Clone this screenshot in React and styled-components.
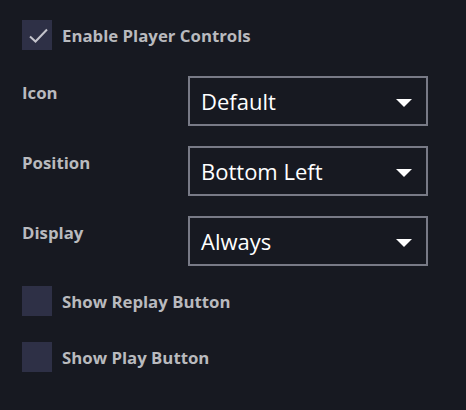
import React, { useState } from 'react'
import styled, { createGlobalStyle } from 'styled-components'

const GlobalStyle = createGlobalStyle`
  html, body {
    margin: 0;
    padding: 0;
    background-color: #171921;
  }
  body {
    font-family: "Open Sans", "Noto Sans", sans-serif;
  }
`

const Panel = styled.div`
  width: 466px;
  height: 410px;
  box-sizing: border-box;
  padding: 20px 38px 0 22px;
  display: flex;
  flex-direction: column;
  background-color: #171921;
`

const CheckRow = styled.label`
  display: flex;
  align-items: center;
  gap: 10px;
  height: 30px;
  margin-top: ${p => p.$top || 0}px;
  cursor: pointer;
`

const Box = styled.span`
  width: 30px;
  height: 30px;
  background-color: #2e3046;
  display: flex;
  align-items: center;
  justify-content: center;
  flex-shrink: 0;
`

const CheckText = styled.span`
  font-size: 16.8px;
  font-weight: 700;
  color: #b9babe;
`

const FieldRow = styled.div`
  display: flex;
  align-items: flex-start;
  margin-top: ${p => p.$top || 0}px;
`

const FieldLabel = styled.span`
  width: 166px;
  padding-top: 5px;
  font-size: 16.8px;
  font-weight: 700;
  color: #b9babe;
`

const Select = styled.div`
  width: 240px;
  height: 50px;
  box-sizing: border-box;
  border: 2px solid #787a86;
  display: flex;
  align-items: center;
  justify-content: space-between;
  padding: 0 14px 0 11px;
  color: #ffffff;
  font-size: 22px;
`

const Caret = styled.span`
  width: 0;
  height: 0;
  border-left: 8px solid transparent;
  border-right: 8px solid transparent;
  border-top: 8px solid #ffffff;
  margin-top: 3px;
`

const Check = () => (
  <svg width="30" height="30" viewBox="0 0 30 30">
    <polyline points="8,16.5 13.5,21.5 25,9.5" fill="none" stroke="#c4c4cc" strokeWidth="2" />
  </svg>
)

const Checkbox = ({ label, checked, top }) => (
  <CheckRow $top={top}>
    <Box>{checked && <Check />}</Box>
    <CheckText>{label}</CheckText>
  </CheckRow>
)

const Field = ({ label, value, top }) => (
  <FieldRow $top={top}>
    <FieldLabel>{label}</FieldLabel>
    <Select>
      <span>{value}</span>
      <Caret />
    </Select>
  </FieldRow>
)

export default function App() {
  const [fields] = useState([
    { label: 'Icon', value: 'Default', top: 26 },
    { label: 'Position', value: 'Bottom Left', top: 20 },
    { label: 'Display', value: 'Always', top: 20 },
  ])
  return (
    <>
      <GlobalStyle />
      <Panel>
        <Checkbox label="Enable Player Controls" checked />
        {fields.map(f => (
          <Field key={f.label} {...f} />
        ))}
        <Checkbox label="Show Replay Button" top={20} />
        <Checkbox label="Show Play Button" top={26} />
      </Panel>
    </>
  )
}
